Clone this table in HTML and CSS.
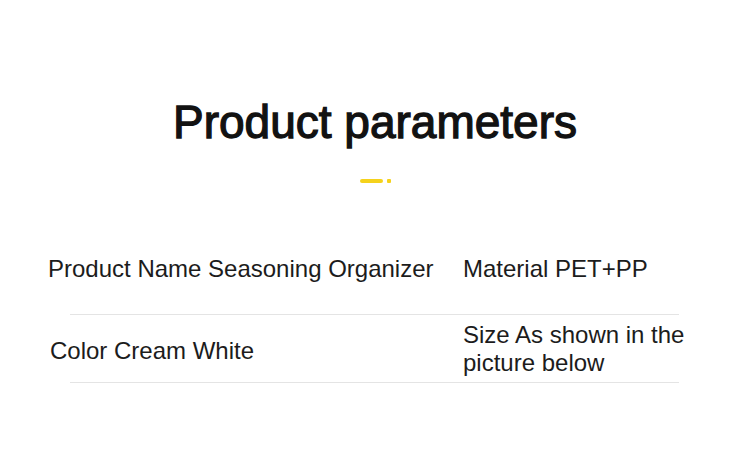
FILE: index.html
```html
<!DOCTYPE html>
<html lang="en">
<head>
<meta charset="utf-8">
<title>Product parameters</title>
<link rel="stylesheet" href="styles.css">
</head>
<body>
<main class="page">
  <header class="heading">
    <h1 class="title">Product parameters</h1>
    <div class="accent"><span class="accent-bar"></span><span class="accent-dot"></span></div>
  </header>
  <section class="params">
    <div class="row row-first">
      <div class="cell cell-left">Product Name Seasoning Organizer</div>
      <div class="cell cell-right">Material PET+PP</div>
    </div>
    <div class="rule"></div>
    <div class="row row-second">
      <div class="cell cell-left cell-shift">Color Cream White</div>
      <div class="cell cell-right">Size As shown in the picture below</div>
    </div>
    <div class="rule"></div>
  </section>
</main>
</body>
</html>
```

FILE: styles.css
```css
html, body {
  margin: 0;
  padding: 0;
  background: #ffffff;
}

body {
  font-family: "Liberation Sans", Arial, sans-serif;
  color: #1c1c1c;
  width: 750px;
  height: 466px;
  overflow: hidden;
}

.page {
  display: flex;
  flex-direction: column;
}

.heading {
  display: flex;
  flex-direction: column;
  align-items: center;
  padding-top: 99px;
}

.title {
  margin: 0;
  font-size: 46px;
  line-height: 46px;
  font-weight: 400;
  -webkit-text-stroke: 1.3px #121212;
  color: #121212;
  letter-spacing: 0;
}

.accent {
  display: flex;
  align-items: center;
  gap: 4px;
  margin-top: 34px;
  height: 4px;
}

.accent-bar {
  width: 23px;
  height: 4px;
  border-radius: 2px;
  background: #f5d21c;
}

.accent-dot {
  width: 4px;
  height: 4px;
  border-radius: 1px;
  background: #f5d21c;
}

.params {
  display: flex;
  flex-direction: column;
  margin-top: 40px;
}

.row {
  display: grid;
  grid-template-columns: 414px 240px;
  align-items: center;
  padding-left: 48px;
  font-size: 24px;
  line-height: 28px;
}

.row-first {
  height: 91px;
}

.row-second {
  height: 67px;
}

.cell-shift {
  padding-left: 2px;
  padding-top: 4px;
}

.cell-right {
  padding-left: 1px;
}

.rule {
  margin-left: 70px;
  width: 609px;
  height: 1px;
  background: #e4e4e4;
}
```
